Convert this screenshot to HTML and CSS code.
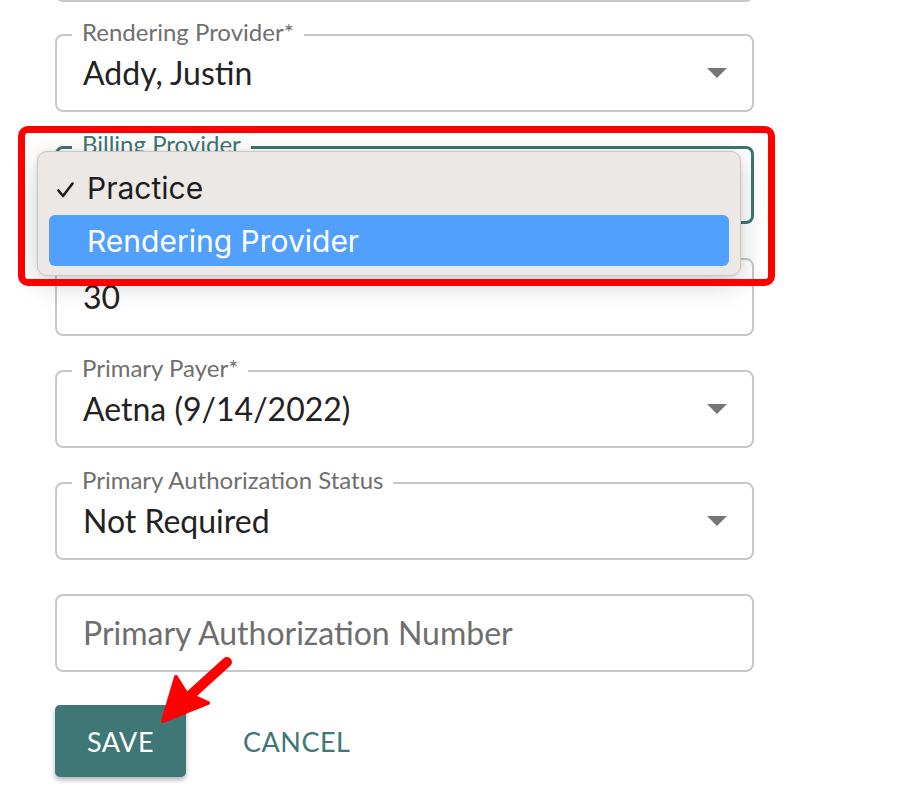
FILE: index.html
```html
<!DOCTYPE html>
<html lang="en">
<head>
<meta charset="utf-8">
<title>Claim form</title>
<link rel="stylesheet" href="styles.css">
</head>
<body>
<div class="page">
  <form class="form">
    <div class="field partial"></div>

    <div class="field">
      <span class="label">Rendering Provider*</span>
      <span class="value">Addy, Justin</span>
      <span class="caret"></span>
    </div>

    <div class="billing-wrap">
      <div class="field focused">
        <span class="label">Billing Provider</span>
        <span class="caret"></span>
      </div>
      <div class="menu">
        <div class="menu-row">
          <span class="check"><svg width="17" height="16" viewBox="0 0 17 16"><polyline points="1.5,8.5 6,14 15.5,1.5" fill="none" stroke="#1d1d1d" stroke-width="2.6" stroke-linecap="round" stroke-linejoin="round"/></svg></span>
          <span>Practice</span>
        </div>
        <div class="menu-row active"><span class="check"></span><span>Rendering Provider</span></div>
      </div>
      <div class="highlight-box"></div>
    </div>

    <div class="field">
      <span class="value">30</span>
    </div>

    <div class="field">
      <span class="label">Primary Payer*</span>
      <span class="value">Aetna (9/14/2022)</span>
      <span class="caret"></span>
    </div>

    <div class="field">
      <span class="label">Primary Authorization Status</span>
      <span class="value">Not Required</span>
      <span class="caret"></span>
    </div>

    <div class="field">
      <span class="value placeholder">Primary Authorization Number</span>
    </div>

    <div class="actions">
      <button type="button" class="btn-save">SAVE</button>
      <button type="button" class="btn-cancel">CANCEL</button>
    </div>
  </form>

  <svg class="pointer" width="100" height="90" viewBox="150 645 100 90" xmlns="http://www.w3.org/2000/svg">
    <line x1="227" y1="662" x2="184" y2="701" stroke="#ff0000" stroke-width="10" stroke-linecap="round"/>
    <polygon points="163,721 176,677 186,693 208,703" fill="#ff0000" stroke="#ff0000" stroke-width="4" stroke-linejoin="round"/>
  </svg>
</div>
</body>
</html>
```

FILE: styles.css
```css
* { box-sizing: border-box; }

html, body {
  margin: 0;
  padding: 0;
  background: #ffffff;
}

body {
  font-family: Lato, "Open Sans", sans-serif;
  color: #222222;
}

.page {
  position: relative;
  width: 920px;
  height: 796px;
  overflow: hidden;
}

.form {
  width: 699px;
  margin-left: 55px;
  display: flex;
  flex-direction: column;
  gap: 34px;
}

.field {
  position: relative;
  height: 78px;
  border: 2px solid #c8c8c8;
  border-radius: 8px;
  padding-left: 26px;
  display: flex;
  align-items: center;
  background: #ffffff;
}

.field.partial {
  margin-top: -76px;
  margin-bottom: -2px;
}

.field.focused {
  border: 3px solid #3d7674;
  padding-left: 25px;
}

.label {
  position: absolute;
  top: -19px;
  left: 15px;
  padding: 0 10px;
  background: #ffffff;
  font-size: 24px;
  line-height: 30px;
  color: #6f6f6f;
  white-space: nowrap;
}

.field.focused .label {
  top: -20px;
  left: 14px;
  color: #3d7674;
}

.value {
  font-size: 32px;
  line-height: 38px;
  color: #222222;
  white-space: nowrap;
}

.value.placeholder {
  color: #6e6e6e;
}

.caret {
  margin-left: auto;
  margin-right: 25px;
  width: 0;
  height: 0;
  border-left: 10px solid transparent;
  border-right: 10px solid transparent;
  border-top: 10px solid #757575;
}

.field.focused .caret {
  margin-right: 24px;
}

.billing-wrap {
  position: relative;
  z-index: 2;
}

.menu {
  position: absolute;
  left: -18px;
  top: 5px;
  width: 704px;
  height: 125px;
  padding: 10px 11px 11px;
  background: #ece8e5;
  border: 1px solid #c9c6c3;
  border-radius: 10px;
  box-shadow: 0 8px 28px rgba(0, 0, 0, 0.18), 0 0 4px rgba(0, 0, 0, 0.08);
  font-family: Inter, "Noto Sans", sans-serif;
  font-size: 30px;
  color: #1d1d1d;
}

.menu-row {
  height: 52px;
  display: flex;
  align-items: center;
  border-radius: 6px;
  white-space: nowrap;
}

.menu-row.active {
  margin-top: 1px;
  height: 51px;
  background: #51a0fe;
  color: #ffffff;
}

.check {
  width: 38px;
  padding-left: 8px;
  display: flex;
  align-items: center;
  padding-top: 3px;
}

.highlight-box {
  position: absolute;
  left: -37px;
  top: -20px;
  width: 757px;
  height: 160px;
  border: 7px solid #ff0000;
  border-radius: 10px;
}

.actions {
  margin-top: -1px;
  display: flex;
  align-items: center;
  gap: 57px;
}

.btn-save {
  width: 131px;
  height: 72px;
  border: none;
  border-radius: 5px;
  background: #3e7775;
  color: #ffffff;
  font-family: Lato, sans-serif;
  font-size: 27px;
  letter-spacing: 0.5px;
  box-shadow: 0 3px 5px rgba(0, 0, 0, 0.3);
  padding: 0;
}

.btn-cancel {
  border: none;
  background: none;
  padding: 0;
  color: #3e7775;
  font-family: Lato, sans-serif;
  font-size: 27px;
  letter-spacing: 0.5px;
}

.pointer {
  position: absolute;
  left: 150px;
  top: 645px;
  z-index: 3;
}
```
